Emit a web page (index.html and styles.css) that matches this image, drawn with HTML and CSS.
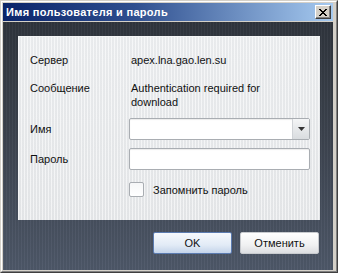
FILE: index.html
```html
<!DOCTYPE html>
<html lang="ru">
<head>
  <meta charset="UTF-8" />
  <title>Имя пользователя и пароль</title>
  <link rel="stylesheet" href="styles.css">
</head>
<body>
  <div class="window">
    <div class="frame">
      <div class="titlebar">
        <span class="title">Имя пользователя и пароль</span>
        <button class="close-btn" aria-label="Закрыть">
          <svg width="8" height="7" viewBox="0 0 8 7">
            <path d="M0 0h2v1h1v1h2v-1h1v-1h2v1h-1v1h-1v1h-1v1h1v1h1v1h1v1h-2v-1h-1v-1h-2v1h-1v1h-2v-1h1v-1h1v-1h1v-1h-1v-1h-1v-1h-1z" fill="#000"/>
          </svg>
        </button>
      </div>

      <div class="body">
        <div class="panel">
          <div class="row row-server">
            <span class="label">Сервер</span>
            <span class="value">apex.lna.gao.len.su</span>
          </div>
          <div class="row row-message">
            <span class="label">Сообщение</span>
            <span class="value">Authentication required for<br>download</span>
          </div>
          <div class="row row-field">
            <span class="label">Имя</span>
            <div class="combo">
              <div class="combo-text"></div>
              <div class="combo-arrow">
                <svg width="7" height="4" viewBox="0 0 7 4"><path d="M0 0h7l-3.5 4z" fill="#333"/></svg>
              </div>
            </div>
          </div>
          <div class="row row-field row-pass">
            <span class="label">Пароль</span>
            <div class="input"></div>
          </div>
          <div class="row row-check">
            <span class="label"></span>
            <span class="checkbox"></span>
            <span class="check-label">Запомнить пароль</span>
          </div>
        </div>

        <div class="buttons">
          <button class="btn btn-default">OK</button>
          <button class="btn">Отменить</button>
        </div>
      </div>
    </div>
  </div>
</body>
</html>
```

FILE: styles.css
```css
html, body {
  margin: 0;
  padding: 0;
  background: #d4d0c8;
}

body {
  font-family: 'Liberation Sans', Arial, sans-serif;
  font-size: 11px;
  color: #111;
}

.window {
  width: 338px;
  height: 273px;
  box-sizing: border-box;
  border: 1px solid;
  border-color: #d4d0c8 #404040 #404040 #d4d0c8;
}

.frame {
  height: 100%;
  box-sizing: border-box;
  border: 1px solid;
  border-color: #ffffff #808080 #808080 #ffffff;
  padding: 1px 3px 1px 1px;
  background: #d4d0c8;
  display: flex;
  flex-direction: column;
}

.titlebar {
  height: 18px;
  margin-bottom: 1px;
  display: flex;
  align-items: center;
  justify-content: space-between;
  padding: 0 2px 0 3px;
  background: linear-gradient(90deg, #0a246a 0%, #2f4f8f 40%, #a6caf0 100%);
}

.title {
  color: #fff;
  font-weight: bold;
  font-size: 11px;
  letter-spacing: 0.3px;
}

.close-btn {
  width: 16px;
  height: 14px;
  padding: 0;
  box-sizing: border-box;
  background: #d4d0c8;
  border: 1px solid;
  border-color: #ffffff #404040 #404040 #ffffff;
  box-shadow: inset -1px -1px 0 #808080;
  display: flex;
  align-items: center;
  justify-content: center;
}

.body {
  flex: 1;
  padding: 14px 0 0 15px;
  background:
    repeating-linear-gradient(90deg, rgba(255,255,255,0.03) 0 1px, rgba(0,0,0,0.04) 1px 3px),
    linear-gradient(180deg, #30353d 0%, #3c434e 45%, #4e5869 100%);
}

.panel {
  width: 302px;
  height: 184px;
  box-sizing: border-box;
  padding: 16px 10px 0 12px;
  background:
    repeating-linear-gradient(90deg, rgba(255,255,255,0.5) 0 1px, rgba(0,0,0,0.015) 1px 3px),
    linear-gradient(180deg, #eceef0 0%, #e6e8ea 100%);
  border-top: 1px solid #f4f5f6;
}

.row {
  display: flex;
  line-height: 14px;
}

.label {
  width: 101px;
  flex: none;
}

.row-message {
  margin-top: 14px;
}

.row-field {
  margin-top: 9px;
  align-items: center;
}

.row-pass {
  margin-top: 8px;
}

.row-field .label {
  width: 99px;
}

.combo, .input {
  width: 181px;
  height: 22px;
  box-sizing: border-box;
  border: 1px solid #a9adb2;
  border-radius: 2px;
  background: #fff;
  box-shadow: inset 0 1px 1px rgba(0,0,0,0.08);
}

.combo {
  display: flex;
}

.combo-text {
  flex: 1;
}

.combo-arrow {
  width: 16px;
  display: flex;
  align-items: center;
  justify-content: center;
  border-left: 1px solid #d0d3d7;
  background: linear-gradient(180deg, #f4f5f6 0%, #d9dcdf 100%);
}

.row-check {
  margin-top: 12px;
  align-items: center;
}

.row-check .label {
  width: 99px;
}

.checkbox {
  width: 13px;
  height: 13px;
  border: 1px solid #a9adb2;
  border-radius: 2px;
  background: linear-gradient(180deg, #f6f7f8 0%, #ffffff 100%);
  margin-right: 9px;
}

.buttons {
  width: 302px;
  margin-top: 12px;
  display: flex;
  justify-content: flex-end;
  gap: 8px;
  padding-right: 1px;
  box-sizing: border-box;
}

.btn {
  width: 79px;
  height: 22px;
  font-family: 'Liberation Sans', Arial, sans-serif;
  font-size: 11px;
  color: #111;
  border: 1px solid #c8cbcf;
  border-radius: 2px;
  background: linear-gradient(180deg, #ffffff 0%, #f0f1f2 60%, #dcdee1 100%);
  padding: 0;
}

.btn-default {
  border-color: #5b7bb0;
  background: linear-gradient(180deg, #f6f9fd 0%, #e2ebf6 60%, #c4d4ea 100%);
}
```
